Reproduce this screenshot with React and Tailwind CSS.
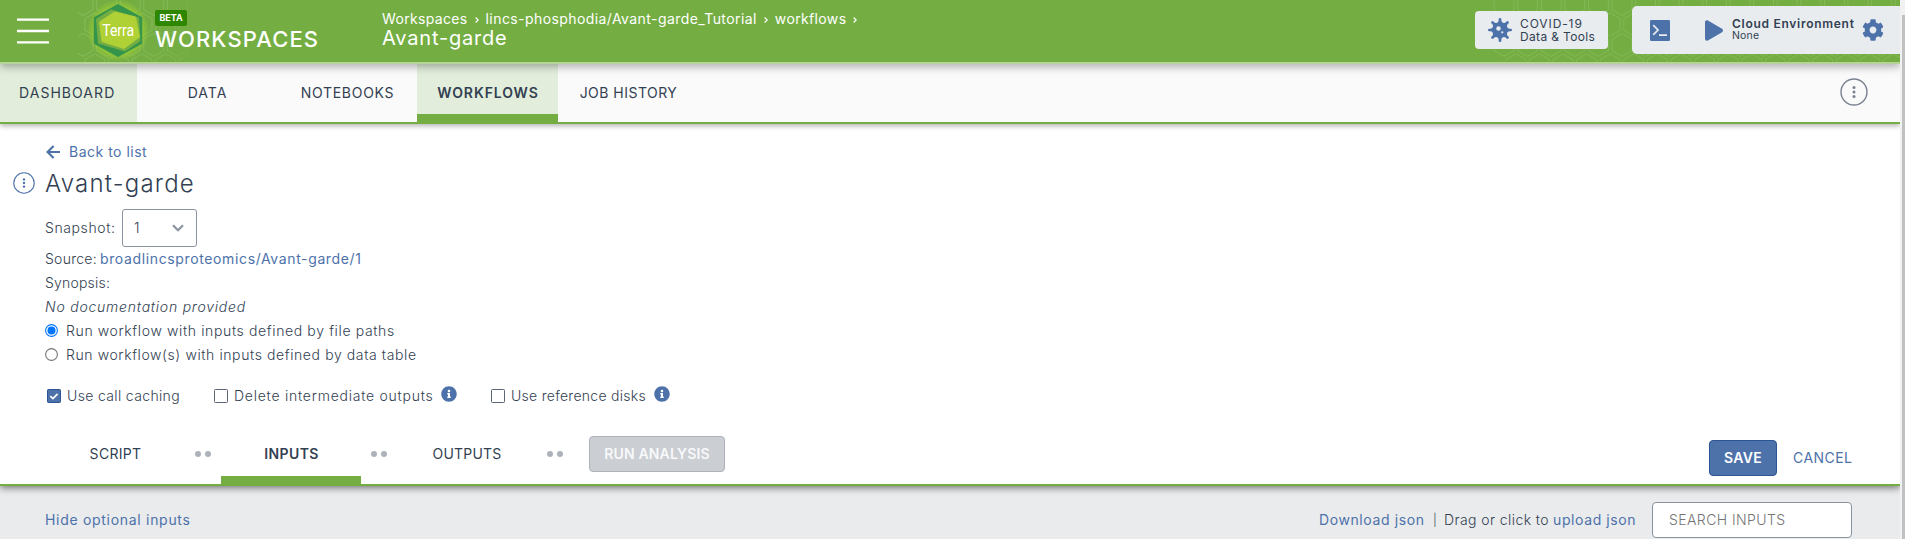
import React from 'react';
import { FaVirus, FaPlay, FaCog, FaInfoCircle } from 'react-icons/fa';

const hexPath = (cx, cy, r) => {
  const w = r * 0.866;
  return `M${cx} ${cy - r}L${cx + w} ${cy - r / 2}V${cy + r / 2}L${cx} ${cy + r}L${cx - w} ${cy + r / 2}V${cy - r / 2}Z`;
};

const hexGrid = (x0, cols, rows, r, pitch) => {
  const out = [];
  for (let j = 0; j < rows; j++) {
    for (let i = 0; i < cols; i++) {
      out.push(hexPath(x0 + i * pitch + (j % 2) * (pitch / 2), 4 + j * pitch * 0.866, r));
    }
  }
  return out.join('');
};

const leftHexes = hexGrid(83, 5, 4, 11.5, 23.6);
const rightHexes = hexGrid(14, 18, 4, 11.5, 23.6);

function HeaderPattern() {
  return (
    <>
      <svg className="absolute left-0 top-0 h-[62px] w-[190px]" viewBox="0 0 190 62">
        <defs>
          <linearGradient id="fadeLeft" x1="0" x2="1" y1="0" y2="0">
            <stop offset="0.4" stopColor="#93c26a" stopOpacity="0.6" />
            <stop offset="0.75" stopColor="#93c26a" stopOpacity="0.45" />
            <stop offset="1" stopColor="#93c26a" stopOpacity="0" />
          </linearGradient>
          <clipPath id="clipLeft"><rect x="78" y="0" width="112" height="62" /></clipPath>
        </defs>
        <path d={leftHexes} fill="none" stroke="url(#fadeLeft)" strokeWidth="1" clipPath="url(#clipLeft)" />
      </svg>
      <svg className="absolute right-0 top-0 h-[62px] w-[410px]" viewBox="0 0 410 62">
        <path d={rightHexes} fill="none" stroke="#93c26a" strokeOpacity="0.5" strokeWidth="1" />
      </svg>
    </>
  );
}

function TerraLogo() {
  return (
    <svg className="h-[62px] w-[62px] shrink-0" viewBox="0 0 62 62">
      <defs>
        <radialGradient id="glow">
          <stop offset="0.7" stopColor="#a6d52f" stopOpacity="0.75" />
          <stop offset="1" stopColor="#a6d52f" stopOpacity="0" />
        </radialGradient>
      </defs>
      <circle cx="31" cy="30.5" r="31" fill="url(#glow)" />
      <path d="M31 5.2L54 18V43L31 55.8L8 43V18Z" fill="#35954a" stroke="#35954a" strokeWidth="2.4" strokeLinejoin="round" />
      <path d="M24 9.5L52 17.5L53.5 41L38 51.5L11 43.5L9 19Z" fill="#74ae43" />
      <path d="M27.5 12L48.5 17L52.5 37L37 48.5L15 41.5L12.5 22Z" fill="#afd135" stroke="#afd135" strokeWidth="1" strokeLinejoin="round" />
      <text x="31.2" y="35.8" textAnchor="middle" textLength="32" lengthAdjust="spacingAndGlyphs" fill="#fff" fontFamily="Roboto" fontWeight="400" fontSize="16">Terra</text>
    </svg>
  );
}

function KebabCircle({ className }) {
  return (
    <svg className={className} viewBox="0 0 28 28" fill="none" stroke="currentColor">
      <circle cx="14" cy="14" r="13" strokeWidth="1.4" />
      <g fill="currentColor" stroke="none">
        <circle cx="14" cy="9.4" r="1.5" />
        <circle cx="14" cy="14" r="1.5" />
        <circle cx="14" cy="18.6" r="1.5" />
      </g>
    </svg>
  );
}

function Crumb({ children, className }) {
  return (
    <>
      <span className={className}>{children}</span>
      <svg className="ml-[7px] mr-[7px] mt-[2px] h-2 w-[4px]" viewBox="0 0 4 8" fill="none" stroke="#fff" strokeWidth="1.2">
        <path d="M0.6 1.5L3.2 4L0.6 6.5" />
      </svg>
    </>
  );
}

function Header() {
  return (
    <header className="relative z-20 flex h-16 shrink-0 items-start border-b-2 border-[#b5d397] bg-[#74ae43] text-white shadow-[0_3px_8px_rgba(0,0,0,0.3)]">
      <HeaderPattern />
      <div className="relative flex h-[62px] w-full">
        <svg className="ml-[17px] mt-[18px] h-[26px] w-8" viewBox="0 0 32 26">
          <path d="M0 1.7H32M0 13H32M0 24.3H32" stroke="#fff" strokeWidth="2.3" />
        </svg>
        <div className="ml-[38px] flex w-[295px]">
          <TerraLogo />
          <div className="ml-[6px] pt-[10px]">
            <div className="flex h-4 w-8 items-center justify-center rounded-[2px] bg-[#2f8600] text-[9px] font-bold tracking-[-0.05px]">BETA</div>
            <div className="mt-px text-[22px] font-medium leading-[25px] tracking-[1.12px]">WORKSPACES</div>
          </div>
        </div>
        <div className="pt-[10px] font-normal">
          <div className="flex items-center text-sm leading-[18px]">
            <Crumb className="tracking-[0.34px]">Workspaces</Crumb>
            <Crumb className="tracking-[0.42px]">lincs-phosphodia/Avant-garde_Tutorial</Crumb>
            <Crumb className="tracking-[0.36px]">workflows</Crumb>
          </div>
          <div className="text-xl leading-5 tracking-[0.82px]">Avant-garde</div>
        </div>
        <div className="ml-auto mt-[11px] flex h-[38px] w-[133px] items-center rounded bg-[#e8ecef] pl-[13px] text-[#333f52]">
          <FaVirus className="size-6 text-[#4d72aa]" />
          <div className="ml-2 whitespace-nowrap text-xs leading-[13px]">
            <div className="tracking-[0.9px]">COVID-19</div>
            <div className="tracking-[0.34px]">Data &amp; Tools</div>
          </div>
        </div>
        <div className="ml-6 mt-[6px] flex h-12 w-[268px] items-center rounded-l-[5px] bg-[#e8ecef] pl-[18px] text-[#333f52]">
          <svg className="h-[21px] w-5" viewBox="0 0 20 21">
            <rect width="20" height="21" rx="1.2" fill="#4d72aa" />
            <path d="M3.2 5.2L8 10L3.2 14.8M9 15.2H17" fill="none" stroke="#e8ecef" strokeWidth="1.7" />
          </svg>
          <FaPlay className="ml-[35px] h-[21px] w-[18px] text-[#4d72aa]" />
          <div className="ml-[9px] w-[130px] whitespace-nowrap leading-3">
            <div className="text-xs font-semibold leading-3 tracking-[0.72px]">Cloud Environment</div>
            <div className="text-[10.5px] leading-3 tracking-[0.2px]">None</div>
          </div>
          <FaCog className="size-[22px] text-[#4d72aa]" />
        </div>
      </div>
    </header>
  );
}

function TopTab({ children, className }) {
  return <div className={`flex w-[140px] items-center justify-center pl-px ${className}`}>{children}</div>;
}

function TopTabs() {
  return (
    <nav className="relative z-10 flex h-[60px] shrink-0 border-b-2 border-[#74ae43] bg-[#fafafa] text-sm shadow-[0_2px_5px_rgba(0,0,0,0.3)]">
      <div className="flex w-[137px] items-center bg-[#e2eedb] pl-[19px] tracking-[1.05px]">DASHBOARD</div>
      <TopTab className="tracking-[1px]">DATA</TopTab>
      <TopTab className="tracking-[0.72px]">NOTEBOOKS</TopTab>
      <div className="flex w-[141px] items-center justify-center border-b-8 border-[#74ae43] bg-[#e2eedb] pl-px pt-2 font-semibold tracking-[0.9px]">WORKFLOWS</div>
      <TopTab className="tracking-[0.48px]">JOB HISTORY</TopTab>
      <KebabCircle className="ml-auto mr-[32px] mt-[14px] size-7 text-[#7a8292]" />
    </nav>
  );
}

function Radio({ checked }) {
  return (
    <svg className="-mt-[2px] mr-[8px] size-[13px]" viewBox="0 0 13 13">
      <circle cx="6.5" cy="6.5" r="5.9" fill="#fff" stroke={checked ? '#0075ff' : '#767676'} strokeWidth="1.1" />
      {checked && <circle cx="6.5" cy="6.5" r="4" fill="#0075ff" />}
    </svg>
  );
}

function Checkbox({ checked }) {
  return (
    <svg className="mr-[6px] size-[14px]" viewBox="0 0 14 14">
      <rect x="0.5" y="0.5" width="13" height="13" rx="0.8" fill={checked ? '#4d72aa' : '#fff'} stroke={checked ? '#2c5594' : '#5d6675'} />
      {checked && <path d="M3.3 7.2L5.9 9.6L10.6 4.9" fill="none" stroke="#fff" strokeWidth="1.7" />}
    </svg>
  );
}

function Dots() {
  return (
    <div className="flex w-9 items-center justify-center gap-1">
      <span className="size-[6px] rounded-full bg-[#aeb2bb]" />
      <span className="size-[6px] rounded-full bg-[#aeb2bb]" />
    </div>
  );
}

function Details() {
  return (
    <section className="shrink-0 whitespace-nowrap bg-white pl-[45px] pt-4 text-sm font-light">
      <div className="flex h-6 items-center font-normal text-[#4d72aa]">
        <svg className="ml-px h-[14px] w-[14px]" viewBox="0 0 14 14" fill="none" stroke="currentColor" strokeWidth="2.1">
          <path d="M7.6 0.9L1.5 7L7.6 13.1M1.6 7H14" />
        </svg>
        <span className="ml-[9px] tracking-[0.5px]">Back to list</span>
      </div>
      <div className="-ml-8 flex h-10 items-center">
        <KebabCircle className="-mt-[2px] size-[22px] text-[#4d72aa]" />
        <h1 className="ml-[10px] text-2xl font-light tracking-[1.2px]">Avant-garde</h1>
      </div>
      <div className="mt-[5px] flex h-[38px] items-center">
        <span className="w-[77px] tracking-[0.6px]">Snapshot:</span>
        <div className="flex h-[38px] w-[75px] items-center rounded-[3px] border border-[#8b92a0] pl-[11px]">
          1
          <svg className="ml-auto mr-3 h-2 w-3" viewBox="0 0 12 8" fill="none" stroke="#8b92a0" strokeWidth="2.2">
            <path d="M1 1.3L6 6.3L11 1.3" />
          </svg>
        </div>
      </div>
      <div className="leading-6">
        <div className="flex">
          <span className="w-[55px] tracking-[0.25px]">Source:</span>
          <a className="font-normal tracking-[0.63px] text-[#4d72aa]">broadlincsproteomics/Avant-garde/1</a>
        </div>
        <div className="tracking-[0.2px]">Synopsis:</div>
        <div className="italic tracking-[0.77px]">No documentation provided</div>
        <label className="flex items-center tracking-[0.63px]"><Radio checked />Run workflow with inputs defined by file paths</label>
        <label className="flex items-center tracking-[0.6px]"><Radio />Run workflow(s) with inputs defined by data table</label>
      </div>
      <div className="mt-[17px] flex h-6 items-center pl-[2px]">
        <label className="flex w-[167px] items-center tracking-[0.35px]"><Checkbox checked />Use call caching</label>
        <label className="flex w-[227px] items-center tracking-[0.76px]"><Checkbox />Delete intermediate outputs</label>
        <FaInfoCircle className="-mt-1 size-4 text-[#4d72aa]" />
        <label className="ml-[34px] flex w-[163px] items-center tracking-[0.28px]"><Checkbox />Use reference disks</label>
        <FaInfoCircle className="-mt-1 size-4 text-[#4d72aa]" />
      </div>
    </section>
  );
}

function StepBar() {
  return (
    <nav className="relative z-10 mt-4 flex h-[62px] shrink-0 items-stretch border-b-2 border-[#74ae43] bg-white pl-[45px] pr-12 text-sm shadow-[0_2px_7px_rgba(0,0,0,0.5)] [clip-path:inset(0_0_-14px_0)]">
      <div className="flex w-[140px] items-center justify-center pl-px tracking-[0.3px]">SCRIPT</div>
      <Dots />
      <div className="flex w-[140px] items-center justify-center border-b-8 border-[#74ae43] pl-px pt-2 font-semibold tracking-[0.4px]">INPUTS</div>
      <Dots />
      <div className="flex w-[140px] items-center justify-center tracking-[0.2px]">OUTPUTS</div>
      <Dots />
      <button className="ml-4 h-9 w-[136px] self-center rounded border border-[#aeb2bb] bg-[#cbced3] font-semibold tracking-[0.15px] text-[#f8f9fa]">RUN ANALYSIS</button>
      <button className="ml-auto mt-4 h-9 w-[68px] rounded border border-[#2c5594] bg-[#4d72aa] font-semibold tracking-[0.3px] text-white">SAVE</button>
      <button className="ml-4 mt-4 h-9 w-[59px] whitespace-nowrap tracking-[0.45px] text-[#4d72aa]">CANCEL</button>
    </nav>
  );
}

function InputsBar() {
  return (
    <section className="flex-1 bg-[#eaebed] pl-[45px] pr-12 pt-4 text-sm">
      <div className="flex h-9 items-center whitespace-nowrap">
        <a className="tracking-[0.7px] text-[#4d72aa]">Hide optional inputs</a>
        <a className="ml-auto w-[114px] tracking-[0.6px] text-[#4d72aa]">Download json</a>
        <span className="w-[11px] text-xs font-light">|</span>
        <span className="w-[109px] font-light tracking-[0.42px]">Drag or click to</span>
        <a className="w-[99px] tracking-[0.6px] text-[#4d72aa]">upload json</a>
        <div className="flex h-9 w-[200px] items-center rounded border border-[#8b92a0] bg-white pl-4 font-light tracking-[0.42px] text-[#757575]">SEARCH INPUTS</div>
      </div>
    </section>
  );
}

export default function App() {
  return (
    <div className="flex h-[539px] w-[1905px] overflow-hidden bg-white font-['Inter',sans-serif] text-[#333f52]">
      <main className="flex w-[1900px] flex-col overflow-hidden">
        <Header />
        <TopTabs />
        <Details />
        <StepBar />
        <InputsBar />
      </main>
      <div className="w-[5px] bg-[#f1f1f1] pl-[2px] pt-[15px]">
        <div className="h-full bg-[#c1c1c1]" />
      </div>
    </div>
  );
}
